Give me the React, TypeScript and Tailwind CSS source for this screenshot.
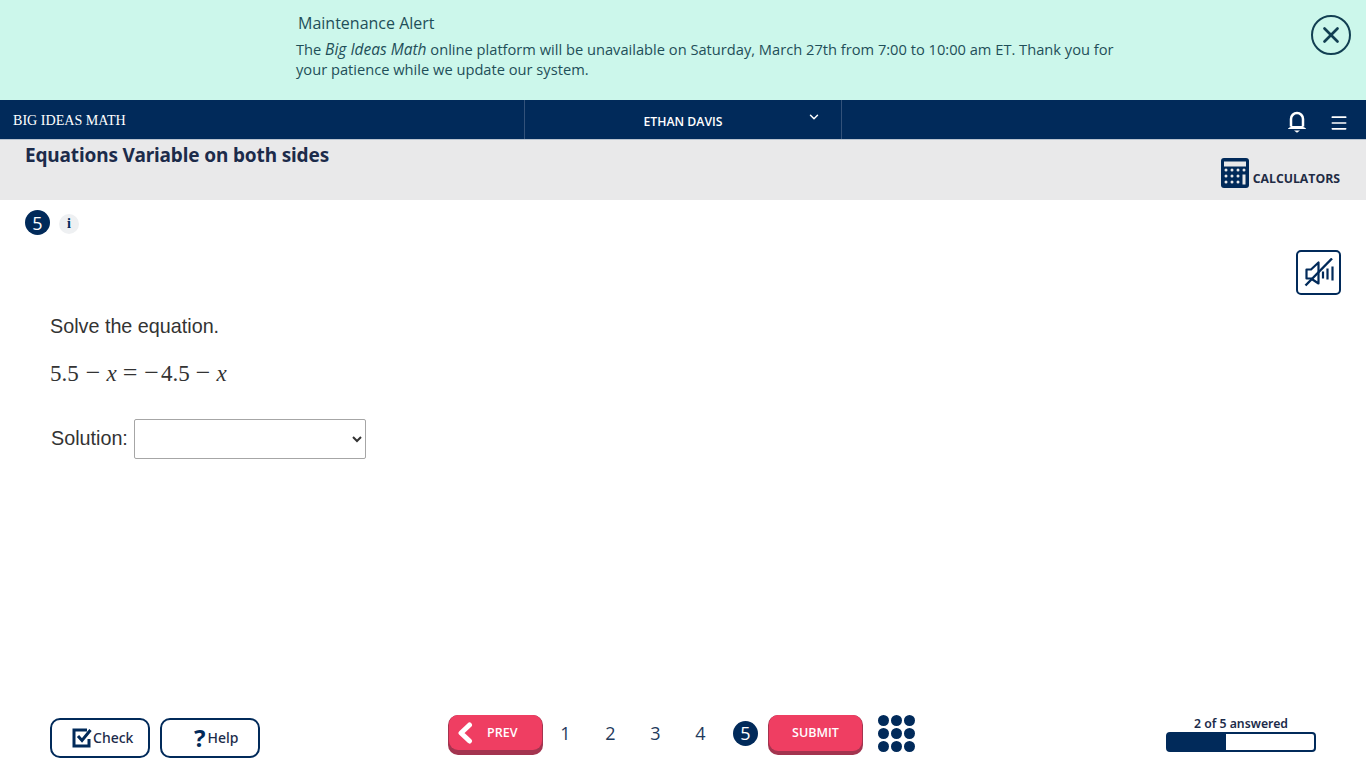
import { ChevronDown, Menu, X } from "lucide-react";

const NAVY = "#012a5a";

// ========================
// Icons
// ========================

const BellIcon = () => (
  <svg width="20" height="22" viewBox="0 0 20 22" fill="none">
    <path d="M4 15.500V8a6 6 0 0 1 12 0v7.500" stroke="#fff" strokeWidth="2.500" />
    <path d="M1.500 17.500c1.500-.5 2.200-1.200 2.500-2h12c.3.800 1 1.500 2.500 2z" fill="#fff" stroke="#fff" strokeWidth="1" strokeLinejoin="round" />
    <path d="M7 19.500h6L10 21.800z" fill="#fff" />
  </svg>
);

const CalculatorIcon = () => (
  <svg width="28" height="30" viewBox="0 0 28 30">
    <rect x="0" y="0" width="28" height="30" rx="3" fill={NAVY} />
    <rect x="3" y="3.500" width="22" height="5" fill="#e9e9ea" />
    {[12, 18, 24].map((y) =>
      [5, 11, 17].map((x) => <circle key={`${x}-${y}`} cx={x} cy={y} r="1.500" fill="#e9e9ea" />),
    )}
    <circle cx="23" cy="12" r="1.500" fill="#e9e9ea" />
    <rect x="21.500" y="16.500" width="3" height="10" fill="#e9e9ea" />
  </svg>
);

const MutedSpeakerIcon = () => (
  <svg width="32" height="30" viewBox="0 0 32 30" fill="none" stroke={NAVY}>
    <path d="M3.500 11.500h4.500l7.500-7v21l-7.500-5H3.500z" strokeWidth="2.200" strokeLinejoin="round" />
    <path d="M20 13.500v7M24.500 10.500v11M29.500 8.500v14" strokeWidth="2.200" />
    <path d="M2.500 27.500 29 .5" strokeWidth="2.400" />
  </svg>
);

const CheckBoxIcon = () => (
  <svg width="20" height="20" viewBox="0 0 20 20" fill="none" stroke={NAVY} strokeWidth="3">
    <path d="M15 2H2v16h15v-7" />
    <path d="M6 8l4 4.500L18.500 2" />
  </svg>
);

const PrevChevron = () => (
  <svg width="16" height="22" viewBox="0 0 16 22" fill="none">
    <path d="M12.500 3 4 11l8.500 8" stroke="#fff" strokeWidth="5" strokeLinecap="round" strokeLinejoin="round" />
  </svg>
);

// ========================
// Sections
// ========================

const AlertBanner = () => (
  <div className="flex h-[100px] shrink-0 bg-[#ccf7eb] text-[#1f4f59]">
    <div className="ml-[296px] w-[840px] pt-[13px] font-['Open_Sans',sans-serif]">
      <p className="ml-[2px] text-base leading-5">Maintenance Alert</p>
      <p className="mt-[6px] text-[14.66px] leading-5">
        The <em className="text-[15.5px]">Big Ideas Math</em> online platform will be unavailable on Saturday, March 27th from 7:00 to 10:00 am ET. Thank you for your patience while we update our system.
      </p>
    </div>
    <div className="ml-auto mr-[15px] mt-[15px]">
      <div className="flex h-10 w-10 items-center justify-center rounded-full border-2 border-[#123f52] text-[#123f52]">
        <X size={26} strokeWidth={2.5} />
      </div>
    </div>
  </div>
);

const NavBar = () => (
  <div className="flex h-10 shrink-0 items-stretch border-b border-[#b9c3cf] bg-[#012a5a] text-white">
    <div className="flex w-[524px] items-center pl-[13px] pt-[2px] font-['Liberation_Serif',serif] text-[14.1px] font-normal">BIG IDEAS MATH</div>
    <div className="relative flex w-[318px] items-center justify-center border-x border-[#33527a] pt-[6px] font-['Open_Sans',sans-serif] text-[12.25px] font-semibold">
      ETHAN DAVIS
      <ChevronDown size={14} strokeWidth={2.5} className="absolute right-[20px] top-[10px]" />
    </div>
    <div className="ml-auto flex items-center pt-[5px]">
      <BellIcon />
      <Menu size={20} strokeWidth={2} className="ml-[22px] mr-[17px] mt-[2px]" />
    </div>
  </div>
);

const TitleBar = () => (
  <div className="flex h-[60px] shrink-0 justify-between bg-[#e9e9ea] pl-[25px] pr-[26px]">
    <h1 className="font-['Noto_Sans',sans-serif] text-[19px] font-bold leading-[30px] tracking-[-0.14px] text-[#1c2b4a]">Equations Variable on both sides</h1>
    <div className="flex items-start pt-[18px]">
      <CalculatorIcon />
      <span className="ml-[4px] mt-[12px] font-['Open_Sans',sans-serif] text-[12.25px] font-bold leading-[18px] text-[#1f2c45]">CALCULATORS</span>
    </div>
  </div>
);

const Equation = () => (
  <div className="mt-[22px] flex items-baseline font-['Liberation_Serif',serif] text-[23px] leading-6">
    <span>5.5</span>
    <span className="ml-[7px] text-[26px] leading-none">−</span>
    <i className="ml-[6px]">x</i>
    <span className="ml-[6px] text-[26px] leading-none">=</span>
    <span className="ml-[7px] text-[26px] leading-none">−</span>
    <span className="ml-[2px]">4.5</span>
    <span className="ml-[6px] text-[26px] leading-none">−</span>
    <i className="ml-[6px]">x</i>
  </div>
);

const Question = () => (
  <div className="relative flex-1 pl-[25px]">
    <div className="flex items-center gap-[9px] pt-[10px]">
      <span className="flex h-[25px] w-[25px] items-center justify-center rounded-full bg-[#012a5a] font-['Open_Sans',sans-serif] text-lg text-white">5</span>
      <span className="mt-[2px] flex h-5 w-5 items-center justify-center rounded-full bg-[#eef0f2] font-['Liberation_Serif',serif] text-sm font-bold text-[#012a5a]">i</span>
    </div>
    <button className="absolute right-[25px] top-[50px] flex h-[45px] w-[45px] items-center justify-center rounded-[5px] border-2 border-[#012a5a] bg-white">
      <MutedSpeakerIcon />
    </button>
    <div className="pl-[25px] pt-[79px] font-['Liberation_Sans',sans-serif] text-[#333]">
      <p className="text-[19.75px] leading-6">Solve the equation.</p>
      <Equation />
      <div className="mt-[33px] flex items-center pl-px">
        <label className="text-[19.75px]">Solution:</label>
        <select className="ml-[6px] h-10 w-[232px] rounded-[2px] border border-[#a6a6a6] bg-white" />
      </div>
    </div>
  </div>
);

const ActionButton = ({ icon, label, pad }: { icon: React.ReactNode; label: string; pad: string }) => (
  <button className={`flex h-10 items-center rounded-[10px] border-2 border-[#012a5a] bg-white font-['Noto_Sans',sans-serif] text-sm font-medium text-[#1c2b4a] ${pad}`}>
    {icon}
    {label}
  </button>
);

const PageNumbers = () => (
  <div className="flex items-center font-['Open_Sans',sans-serif] text-lg text-[#1f3a5c]">
    {[1, 2, 3, 4].map((n) => (
      <span key={n} className="w-[45px] text-center">{n}</span>
    ))}
    <span className="ml-[10px] flex h-[25px] w-[25px] items-center justify-center rounded-full bg-[#012a5a] text-white">5</span>
  </div>
);

const Footer = () => (
  <div className="flex h-[68px] shrink-0 pl-[50px] pr-[50px]">
    <div className="flex w-[398px] gap-[10px] pt-[18px]">
      <ActionButton icon={<CheckBoxIcon />} label="Check" pad="w-[100px] pl-[20px] gap-[1px]" />
      <ActionButton icon={<span className="text-[24px] font-bold leading-none text-[#012a5a]">?</span>} label="Help" pad="w-[100px] pl-[32px] gap-[2px]" />
    </div>
    <div className="flex items-start pt-[15px]">
      <button className="flex h-10 w-[95px] items-start rounded-[10px] bg-[#a3344f] px-px font-['Open_Sans',sans-serif] text-[12.5px] font-semibold text-white">
        <span className="flex h-[35px] w-full items-center rounded-[9px] bg-[#ef3e62] pl-[8px]">
          <PrevChevron />
          <span className="ml-[14px] pt-px">PREV</span>
        </span>
      </button>
      <div className="flex h-[36px] items-center">
        <PageNumbers />
      </div>
      <button className="ml-[10px] flex h-10 w-[95px] items-start rounded-[10px] bg-[#a3344f] px-px font-['Open_Sans',sans-serif] text-[12.5px] font-semibold text-white">
        <span className="flex h-[36px] w-full items-center justify-center rounded-[9px] bg-[#ef3e62] pt-px">SUBMIT</span>
      </button>
      <div className="ml-[15px] grid grid-cols-3 gap-[2px]">
        {Array.from({ length: 9 }).map((_, i) => (
          <span key={i} className="h-[11px] w-[11px] rounded-full bg-[#012a5a]" />
        ))}
      </div>
    </div>
    <div className="ml-auto w-[150px]">
      <p className="pt-[16px] text-center font-['Noto_Sans',sans-serif] text-[12.25px] font-semibold leading-[16px] text-[#1c2b4a]">2 of 5 answered</p>
      <div className="h-5 rounded-[4px] border-2 border-[#012a5a] bg-white">
        <div className="h-full w-[40%] bg-[#012a5a]" />
      </div>
    </div>
  </div>
);

export default function App() {
  return (
    <div className="flex h-[768px] flex-col overflow-hidden bg-white">
      <AlertBanner />
      <NavBar />
      <TitleBar />
      <Question />
      <Footer />
    </div>
  );
}
